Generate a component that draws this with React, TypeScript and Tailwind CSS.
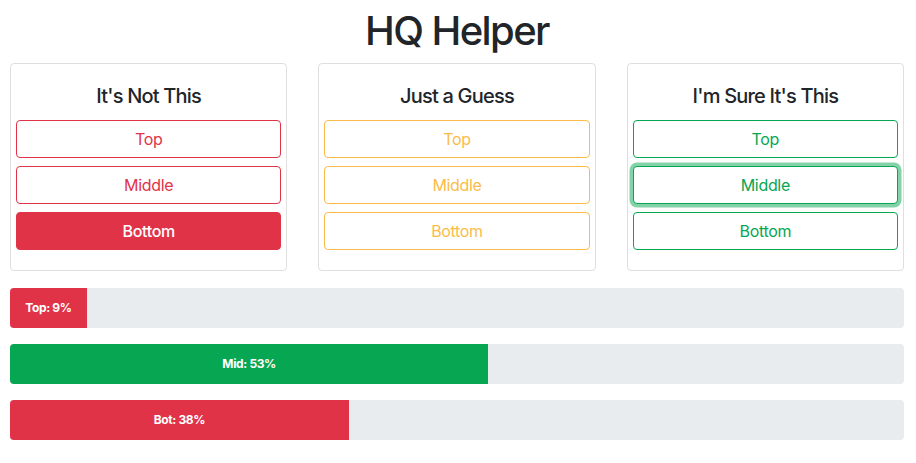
import React from "react";

const font = { fontFamily: "Inter, 'Noto Sans', sans-serif" };

type Variant = "red" | "amber" | "green";

function Btn({ label, variant, solid, focus }: { label: string; variant: Variant; solid?: boolean; focus?: boolean }) {
  let cls = "";
  if (variant === "red") {
    cls = solid ? "bg-[#e13348] border-[#e13348] text-white font-medium" : "border-[#e13348] text-[#e13348] bg-white";
  } else if (variant === "amber") {
    cls = "border-[#fbbc4a] text-[#fbbc4a] bg-white";
  } else {
    cls = "border-[#07a652] text-[#07a652] bg-white";
  }
  const ring = focus ? "shadow-[0_0_0_3.5px_rgba(7,166,82,0.5)]" : "";
  return (
    <button
      className={`h-[38px] w-full rounded-[4px] border text-[16px] leading-[24px] tracking-[-0.02em] ${cls} ${ring}`}
    >
      {label}
    </button>
  );
}

function Card({ title, variant, solidIdx, focusIdx }: { title: string; variant: Variant; solidIdx?: number; focusIdx?: number }) {
  const labels = ["Top", "Middle", "Bottom"];
  return (
    <div className="rounded-[4px] border border-[#dfdfdf] px-[5px] pt-[20px] pb-[20px]">
      <h5 className="text-center text-[20px] leading-[24px] font-medium tracking-[-0.04em] text-[#212529] mb-[12px]">{title}</h5>
      <div className="flex flex-col gap-[8px]">
        {labels.map((l, i) => (
          <Btn key={l} label={l} variant={variant} solid={solidIdx === i} focus={focusIdx === i} />
        ))}
      </div>
    </div>
  );
}

function Bar({ label, pct, color }: { label: string; pct: number; color: string }) {
  return (
    <div className="h-[40px] w-full rounded-[4px] bg-[#e9ecef] overflow-hidden flex">
      <div
        className={`h-full flex items-center justify-center text-white text-[12px] font-bold tracking-[-0.03em] ${color}`}
        style={{ width: `${pct}%` }}
      >
        {label}
      </div>
    </div>
  );
}

export default function App() {
  return (
    <div className="bg-white w-[916px] h-[463px] pl-[10px] pr-[12px] pt-[7px]" style={font}>
      <h1 className="text-center text-[40px] leading-[48px] font-medium tracking-[-0.04em] text-[#212529] mb-[8px]">HQ Helper</h1>
      <div className="grid grid-cols-3 gap-[31px]">
        <Card title="It's Not This" variant="red" solidIdx={2} />
        <Card title="Just a Guess" variant="amber" />
        <Card title="I'm Sure It's This" variant="green" focusIdx={1} />
      </div>
      <div className="mt-[17px] flex flex-col gap-[16px]">
        <Bar label="Top: 9%" pct={8.6} color="bg-[#e13348]" />
        <Bar label="Mid: 53%" pct={53.5} color="bg-[#07a652]" />
        <Bar label="Bot: 38%" pct={37.9} color="bg-[#e13348]" />
      </div>
    </div>
  );
}
